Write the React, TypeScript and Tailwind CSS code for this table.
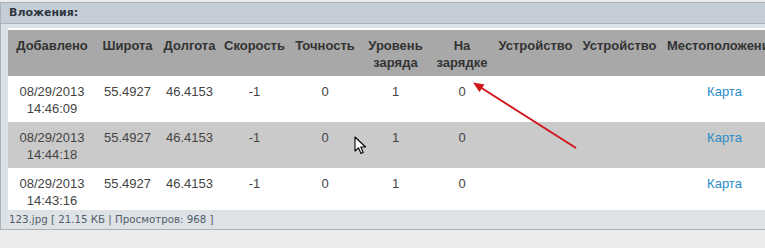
import React from "react";

type Row = { date: string; time: string; lat: string; lon: string; speed: string; acc: string; level: string; charging: string };

const rows: Row[] = [
  { date: "08/29/2013", time: "14:46:09", lat: "55.4927", lon: "46.4153", speed: "-1", acc: "0", level: "1", charging: "0" },
  { date: "08/29/2013", time: "14:44:18", lat: "55.4927", lon: "46.4153", speed: "-1", acc: "0", level: "1", charging: "0" },
  { date: "08/29/2013", time: "14:43:16", lat: "55.4927", lon: "46.4153", speed: "-1", acc: "0", level: "1", charging: "0" },
];

const widths = [88, 63, 61, 69, 72, 69, 64, 83, 85, 125];

const headers: React.ReactNode[] = [
  "Добавлено",
  "Широта",
  "Долгота",
  "Скорость",
  "Точность",
  <>Уровень<br />заряда</>,
  <>На<br />зарядке</>,
  "Устройство",
  "Устройство",
  "Местоположение",
];

const rowStyles = ["h-[46px] bg-white", "h-[46px] bg-[#cacaca]", "h-[42px] bg-white"];

function Cursor() {
  return (
    <svg className="absolute left-[354px] top-[136px]" width="14" height="20" viewBox="0 0 14 20">
      <path d="M1 1 L1 15 L4.5 11.8 L7 17.5 L9.2 16.5 L6.8 11 L11.5 11 Z" fill="#fff" stroke="#000" strokeWidth="1.1" strokeLinejoin="round" />
    </svg>
  );
}

function Arrow() {
  return (
    <svg className="absolute left-0 top-0 pointer-events-none" width="765" height="248" viewBox="0 0 765 248">
      <line x1="576" y1="148" x2="480" y2="87" stroke="#d0161b" strokeWidth="2" />
      <path d="M473 82.5 L484.5 84.5 L479.5 92 Z" fill="#d0161b" />
    </svg>
  );
}

export default function App() {
  return (
    <div className="relative w-[765px] h-[248px] overflow-hidden bg-[#ebebeb] pt-[2px]">
      <div className="w-[790px] border border-[#a9b2ba] bg-[#dde2e6]">
        <div className="h-[21px] bg-[#c5ced6] border-b border-[#a9b2ba] pl-[8px] flex items-center font-['DejaVu_Sans',sans-serif] font-bold text-[11px] text-[#2e3740]">
          Вложения:
        </div>
        <div className="pl-[7px] pt-[4px]">
          <div className="bg-white pt-[2px] font-['Liberation_Sans',Arial,sans-serif] text-[13px] leading-[17px]">
            <table className="table-fixed border-collapse">
              <colgroup>
                {widths.map((w, i) => (
                  <col key={i} style={{ width: w }} />
                ))}
              </colgroup>
              <thead>
                <tr className="h-[46px] bg-[#a8a8a8]">
                  {headers.map((h, i) => (
                    <th
                      key={i}
                      className={
                        i === 9
                          ? "align-top pt-[7px] pl-[5px] text-left font-bold text-[#333] whitespace-nowrap"
                          : "align-top pt-[7px] text-center font-bold text-[#333] whitespace-nowrap p-0"
                      }
                    >
                      {h}
                    </th>
                  ))}
                </tr>
              </thead>
              <tbody>
                {rows.map((r, i) => (
                  <tr key={i} className={rowStyles[i]}>
                    <td className="align-top pt-[7px] text-center text-[#444]">
                      {r.date}
                      <br />
                      {r.time}
                    </td>
                    <td className="align-top pt-[7px] text-center text-[#444]">{r.lat}</td>
                    <td className="align-top pt-[7px] text-center text-[#444]">{r.lon}</td>
                    <td className="align-top pt-[7px] text-center text-[#444]">{r.speed}</td>
                    <td className="align-top pt-[7px] text-center text-[#444]">{r.acc}</td>
                    <td className="align-top pt-[7px] text-center text-[#444]">{r.level}</td>
                    <td className="align-top pt-[7px] text-center text-[#444]">{r.charging}</td>
                    <td />
                    <td />
                    <td className="align-top pt-[7px] text-center">
                      <span className="text-[#2a8bc6]">Карта</span>
                    </td>
                  </tr>
                ))}
              </tbody>
            </table>
          </div>
        </div>
        <div className="h-[19px] pl-[8px] flex items-center font-['DejaVu_Sans',sans-serif] text-[10.25px] text-[#555e66]">
          123.jpg [ 21.15 КБ | Просмотров: 968 ]
        </div>
      </div>
      <Cursor />
      <Arrow />
    </div>
  );
}
